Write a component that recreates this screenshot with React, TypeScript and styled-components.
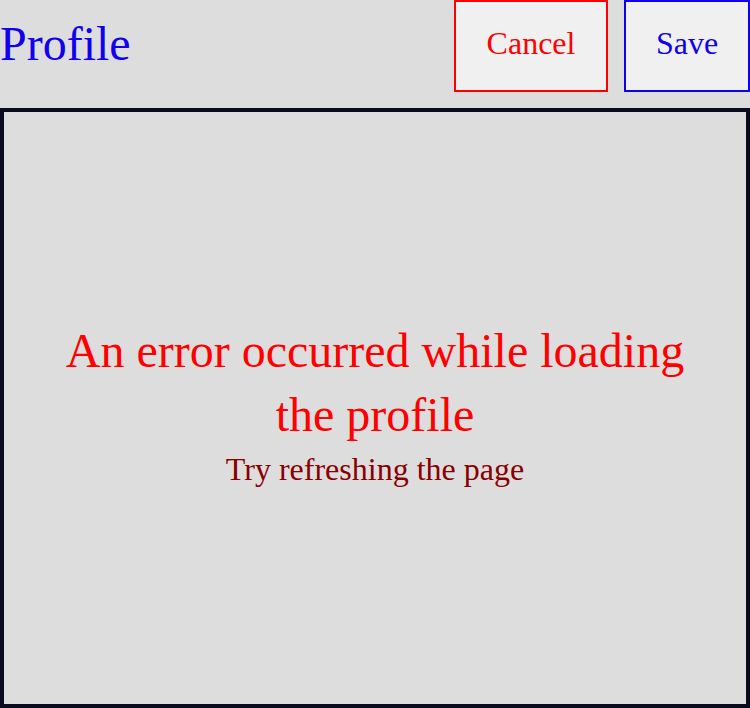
import React from 'react';
import styled, { createGlobalStyle } from 'styled-components';

const GlobalStyle = createGlobalStyle`
  html, body {
    margin: 0;
    padding: 0;
    background-color: #dddddd;
  }
  body {
    font-family: 'Liberation Serif', 'Times New Roman', serif;
  }
`;

const Page = styled.div`
  width: 750px;
  height: 708px;
  display: flex;
  flex-direction: column;
  background-color: #dddddd;
`;

const Header = styled.div`
  display: flex;
  align-items: center;
  justify-content: space-between;
  height: 92px;
  margin-bottom: 16px;
`;

const Title = styled.h1`
  margin: 0 0 6px;
  font-size: 48px;
  font-weight: normal;
  color: #1100ee;
`;

const Actions = styled.div`
  display: flex;
  gap: 16px;
  height: 100%;
`;

const ActionButton = styled.button<{ $tone: string; $width: number }>`
  width: ${(p) => p.$width}px;
  height: 92px;
  padding: 0 0 6px;
  background-color: #f0f0f0;
  border: 2px solid ${(p) => p.$tone};
  color: ${(p) => p.$tone};
  font-family: 'Liberation Serif', 'Times New Roman', serif;
  font-size: 32px;
  cursor: pointer;
`;

const Panel = styled.div`
  flex: 1;
  border: 4px solid #0a0a1e;
  padding-bottom: 10px;
  display: flex;
  flex-direction: column;
  align-items: center;
  justify-content: center;
  text-align: center;
`;

const ErrorTitle = styled.div`
  font-size: 48px;
  line-height: 64px;
  color: #ff0000;
  padding: 0 40px;
  margin-bottom: 4px;
`;

const ErrorHint = styled.div`
  font-size: 32px;
  color: #880000;
`;

export default function App(): React.ReactElement {
  return (
    <>
      <GlobalStyle />
      <Page>
        <Header>
          <Title>Profile</Title>
          <Actions>
            <ActionButton $tone="#ff0000" $width={154}>
              Cancel
            </ActionButton>
            <ActionButton $tone="#1100ee" $width={126}>
              Save
            </ActionButton>
          </Actions>
        </Header>
        <Panel>
          <ErrorTitle>An error occurred while loading the profile</ErrorTitle>
          <ErrorHint>Try refreshing the page</ErrorHint>
        </Panel>
      </Page>
    </>
  );
}
